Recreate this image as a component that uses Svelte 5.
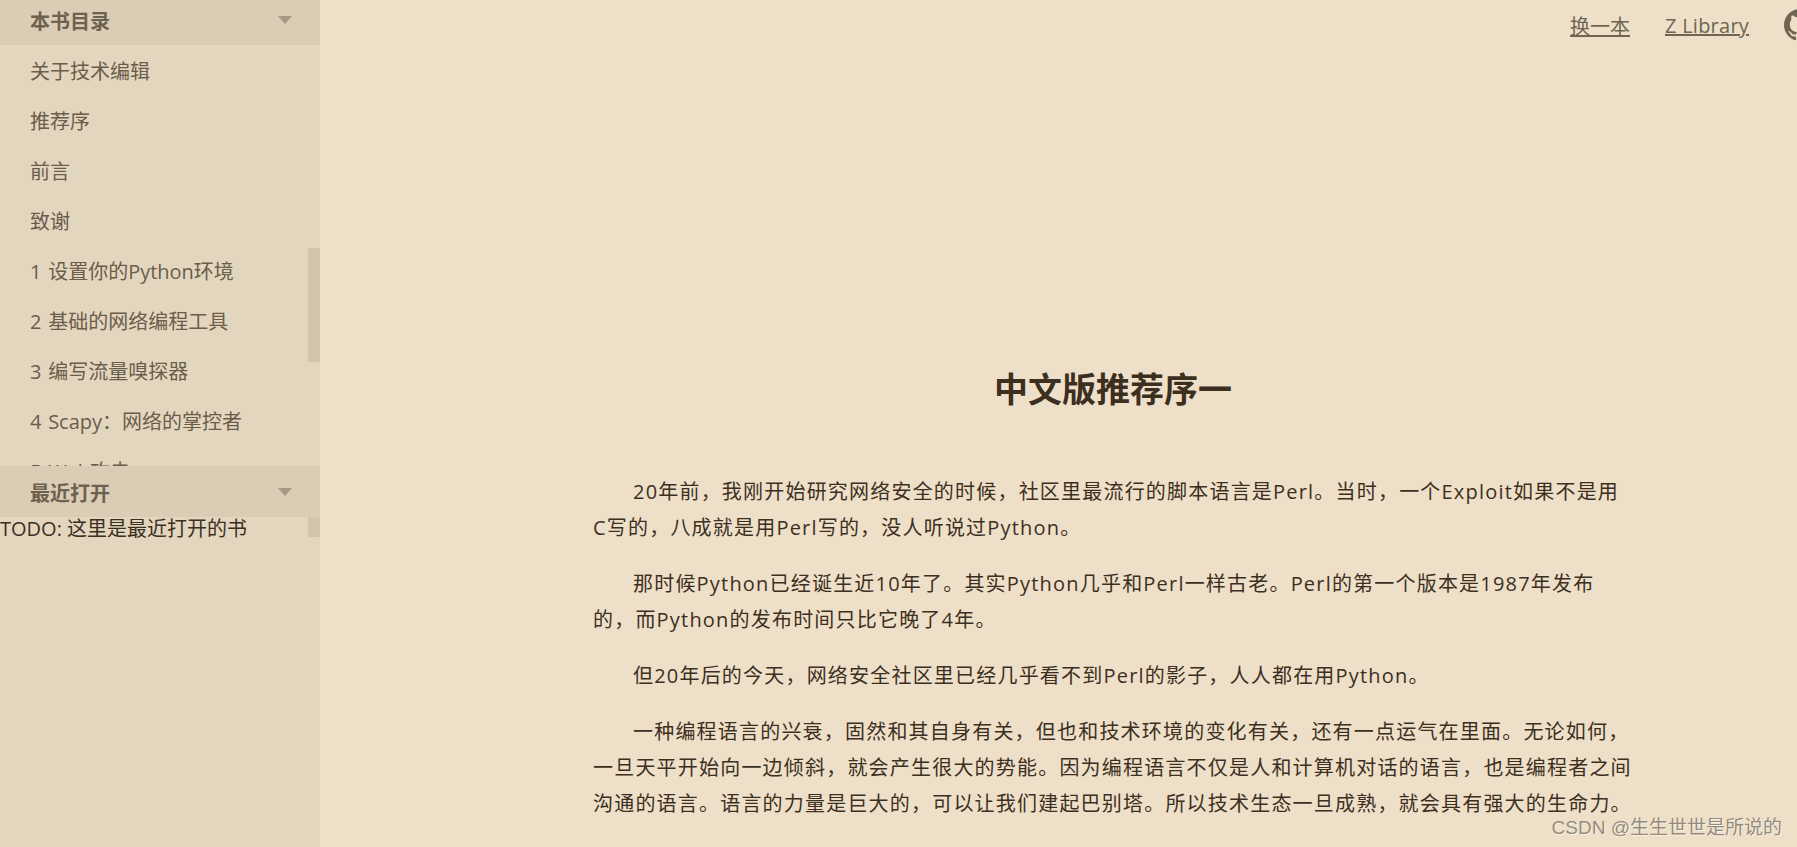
<script lang="ts">
	const chapters = [
		'关于技术编辑',
		'推荐序',
		'前言',
		'致谢',
		'1 设置你的Python环境',
		'2 基础的网络编程工具',
		'3 编写流量嗅探器',
		'4 Scapy：网络的掌控者',
		'5 Web攻击'
	];

	// the first paragraph keeps the reference's line break
	const paragraphs = [
		'20年前，我刚开始研究网络安全的时候，社区里最流行的脚本语言是Perl。当时，一个Exploit如果不是用\nC写的，八成就是用Perl写的，没人听说过Python。',
		'那时候Python已经诞生近10年了。其实Python几乎和Perl一样古老。Perl的第一个版本是1987年发布的，而Python的发布时间只比它晚了4年。',
		'但20年后的今天，网络安全社区里已经几乎看不到Perl的影子，人人都在用Python。',
		'一种编程语言的兴衰，固然和其自身有关，但也和技术环境的变化有关，还有一点运气在里面。无论如何，一旦天平开始向一边倾斜，就会产生很大的势能。因为编程语言不仅是人和计算机对话的语言，也是编程者之间沟通的语言。语言的力量是巨大的，可以让我们建起巴别塔。所以技术生态一旦成熟，就会具有强大的生命力。'
	];
</script>

<div class="reader">
	<aside class="sidebar">
		<section class="toc">
			<header class="panel-head first">
				<span>本书目录</span>
				<i class="caret"></i>
			</header>
			<ul>
				{#each chapters as chapter}
					<li>{chapter}</li>
				{/each}
			</ul>
		</section>
		<section class="recent">
			<header class="panel-head">
				<span>最近打开</span>
				<i class="caret"></i>
			</header>
			<div class="todo">TODO: 这里是最近打开的书</div>
		</section>
		<div class="thumb thumb-a"></div>
		<div class="thumb thumb-b"></div>
	</aside>

	<main class="content">
		<nav class="links">
			<a href="#next">换一本</a>
			<a href="#zlib">Z Library</a>
			<svg class="github" viewBox="0 0 16 16" aria-hidden="true">
				<path
					d="M8 0C3.58 0 0 3.58 0 8c0 3.54 2.29 6.53 5.47 7.59.4.07.55-.17.55-.38 0-.19-.01-.82-.01-1.49-2.01.37-2.53-.49-2.69-.94-.09-.23-.48-.94-.82-1.13-.28-.15-.68-.52-.01-.53.63-.01 1.08.58 1.23.82.72 1.21 1.87.87 2.33.66.07-.52.28-.87.51-1.07-1.78-.2-3.64-.89-3.64-3.95 0-.87.31-1.59.82-2.15-.08-.2-.36-1.02.08-2.12 0 0 .67-.21 2.2.82.64-.18 1.32-.27 2-.27s1.36.09 2 .27c1.53-1.04 2.2-.82 2.2-.82.44 1.1.16 1.92.08 2.12.51.56.82 1.27.82 2.15 0 3.07-1.87 3.75-3.65 3.95.29.25.54.73.54 1.48 0 1.07-.01 1.93-.01 2.2 0 .21.15.46.55.38A8.01 8.01 0 0 0 16 8c0-4.42-3.58-8-8-8z"
				/>
			</svg>
		</nav>
		<article class="page">
			<h1>中文版推荐序一</h1>
			{#each paragraphs as text}
				<p>{text}</p>
			{/each}
		</article>
	</main>

	<div class="watermark">CSDN @生生世世是所说的</div>
</div>

<style>
	:global(body) {
		margin: 0;
		overflow: hidden;
		background: #eee0c8;
	}
	.reader {
		display: flex;
		height: 847px;
		overflow: hidden;
		position: relative;
		font-family: 'Open Sans', 'Noto Sans CJK SC', sans-serif;
		background: #eee0c8;
	}
	.sidebar {
		position: relative;
		flex: 0 0 320px;
		background: #e3d6bf;
		overflow: hidden;
	}
	.toc {
		height: 466px;
		overflow: hidden;
	}
	.panel-head {
		display: flex;
		align-items: center;
		justify-content: space-between;
		box-sizing: border-box;
		height: 51px;
		padding: 2px 28px 0 30px;
		background: #dbccb5;
		color: #6d6150;
		font-size: 20px;
		font-weight: 700;
	}
	.panel-head.first {
		margin-top: -6px;
	}
	.caret {
		width: 0;
		height: 0;
		margin-top: -2px;
		border-left: 7px solid transparent;
		border-right: 7px solid transparent;
		border-top: 8px solid #a79a85;
	}
	ul {
		list-style: none;
		margin: 0;
		padding: 2px 0 0;
	}
	li {
		height: 50px;
		line-height: 50px;
		padding-left: 30px;
		font-size: 20px;
		word-spacing: 1.5px;
		color: #6b5c4b;
		white-space: nowrap;
	}
	.todo {
		position: relative;
		z-index: 1;
		font-size: 20px;
		line-height: 24px;
		color: #3d2f1f;
		white-space: nowrap;
	}
	.thumb {
		position: absolute;
		right: 0;
		width: 12px;
		background: #d2c4ad;
	}
	.thumb-a {
		top: 248px;
		height: 114px;
	}
	.thumb-b {
		top: 517px;
		height: 20px;
	}
	.content {
		flex: 1;
		min-width: 0;
	}
	.links {
		display: flex;
		align-items: center;
		height: 50px;
		gap: 35px;
		padding-left: 1250px;
		white-space: nowrap;
		font-size: 20px;
	}
	.links a {
		color: #6f6552;
		text-decoration: underline;
	}
	.links a + a {
		letter-spacing: 0.25px;
	}
	.github {
		flex: none;
		width: 32px;
		height: 32px;
		fill: #6f6552;
	}
	.page {
		width: 1040px;
		margin-left: 273px;
		color: #3d2f1f;
	}
	h1 {
		margin: 315px 0 61px;
		text-align: center;
		font-size: 34px;
		font-weight: 700;
		line-height: 48px;
	}
	p {
		margin: 0 0 20px;
		font-size: 20px;
		line-height: 36px;
		letter-spacing: 1.2px;
		text-indent: 40px;
		white-space: pre-line;
	}
	.watermark {
		position: absolute;
		right: 15px;
		bottom: 8px;
		font-size: 19px;
		font-family: 'Liberation Sans', 'Noto Sans CJK SC', sans-serif;
		color: #948c7c;
		text-shadow: 1px 1px 0 #fff8;
	}
</style>
